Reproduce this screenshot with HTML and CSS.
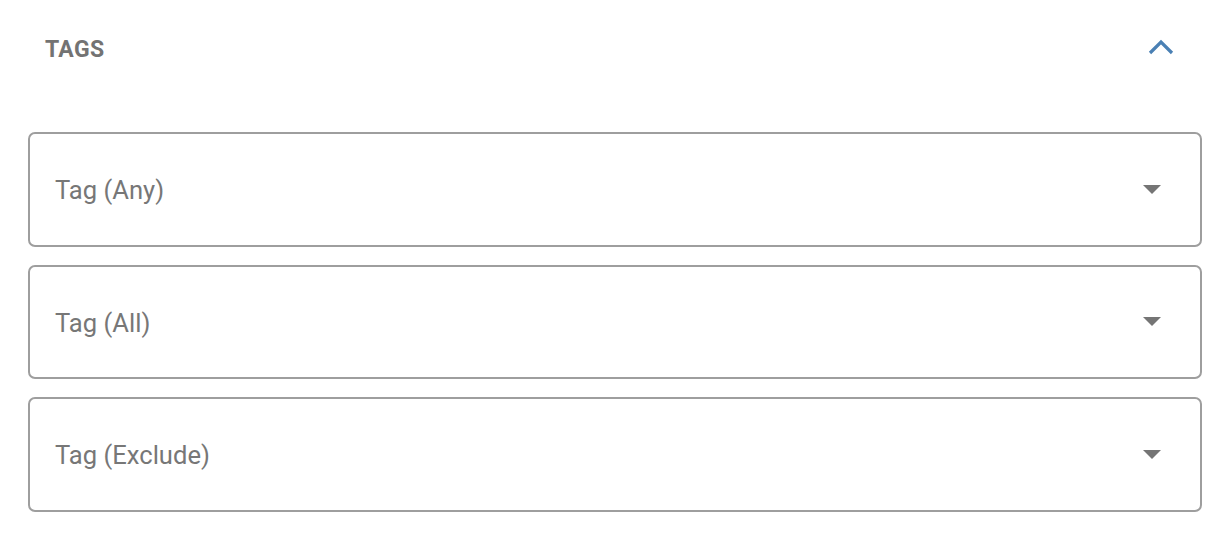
FILE: index.html
```html
<!DOCTYPE html>
<html>
<head>
<meta charset="utf-8">
<link rel="stylesheet" href="styles.css">
</head>
<body>
<section class="panel">
  <div class="panel-header">
    <span class="panel-title">TAGS</span>
    <svg class="chevron" width="26" height="16" viewBox="0 0 26 16"><path d="M2 14 L13 3 L24 14" fill="none" stroke="#4a80b4" stroke-width="3.2"/></svg>
  </div>
  <div class="fields">
    <div class="select"><span class="label">Tag (Any)</span><span class="caret"></span></div>
    <div class="select"><span class="label">Tag (All)</span><span class="caret"></span></div>
    <div class="select"><span class="label">Tag (Exclude)</span><span class="caret"></span></div>
  </div>
</section>
</body>
</html>
```
FILE: styles.css
```css
html, body {
  margin: 0;
  padding: 0;
  background: #ffffff;
  font-family: Roboto, "Liberation Sans", sans-serif;
}
.panel {
  padding: 0 26px 0 28px;
}
.panel-header {
  height: 98px;
  display: flex;
  align-items: center;
  justify-content: space-between;
  padding: 0 28px 0 17px;
  box-sizing: border-box;
}
.panel-title {
  font-size: 23px;
  font-weight: 700;
  color: #737373;
  letter-spacing: 0.3px;
}
.chevron {
  display: block;
  margin-top: -4px;
}
.fields {
  margin-top: 34px;
  display: flex;
  flex-direction: column;
  gap: 18px;
}
.select {
  height: 114.5px;
  box-sizing: border-box;
  border: 2px solid #9e9e9e;
  border-radius: 7px;
  display: flex;
  align-items: center;
  justify-content: space-between;
  padding: 0 39px 0 25px;
}
.label {
  font-size: 25.6px;
  color: #777777;
  margin-top: 2px;
}
.caret {
  width: 0;
  height: 0;
  border-left: 9px solid transparent;
  border-right: 9px solid transparent;
  border-top: 9px solid #757575;
}
```
